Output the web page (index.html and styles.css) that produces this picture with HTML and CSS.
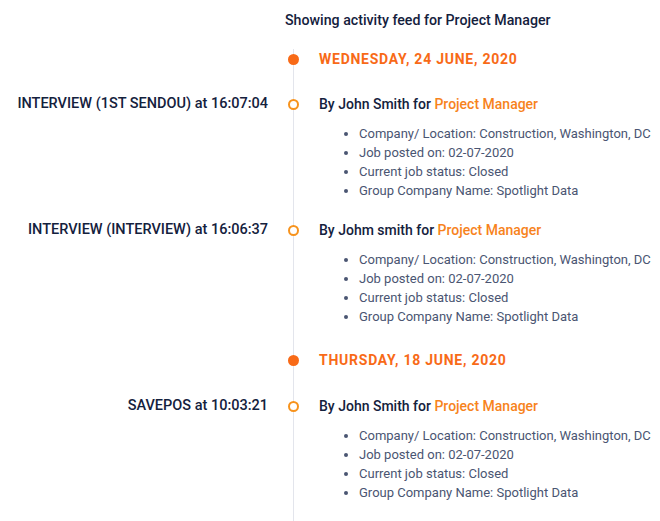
FILE: index.html
```html
<!DOCTYPE html>
<html>
<head>
<meta charset="utf-8">
<link rel="stylesheet" href="styles.css">
</head>
<body>
<div class="page">
  <div class="header">Showing activity feed for Project Manager</div>
  <div class="timeline">
    <div class="row date-row">
      <div class="left"></div>
      <div class="axis"><span class="dot filled"></span></div>
      <div class="content date">WEDNESDAY, 24 JUNE, 2020</div>
    </div>
    <div class="row item-row first">
      <div class="left">INTERVIEW (1ST SENDOU) at 16:07:04</div>
      <div class="axis"><span class="dot ring"></span></div>
      <div class="content">
        <div class="title">By John Smith for <span class="link">Project Manager</span></div>
        <ul class="details">
          <li>Company/ Location: Construction, Washington, DC</li>
          <li>Job posted on: 02-07-2020</li>
          <li>Current job status: Closed</li>
          <li>Group Company Name: Spotlight Data</li>
        </ul>
      </div>
    </div>
    <div class="row item-row">
      <div class="left">INTERVIEW (INTERVIEW) at 16:06:37</div>
      <div class="axis"><span class="dot ring"></span></div>
      <div class="content">
        <div class="title">By Johm smith for <span class="link">Project Manager</span></div>
        <ul class="details">
          <li>Company/ Location: Construction, Washington, DC</li>
          <li>Job posted on: 02-07-2020</li>
          <li>Current job status: Closed</li>
          <li>Group Company Name: Spotlight Data</li>
        </ul>
      </div>
    </div>
    <div class="row date-row second">
      <div class="left"></div>
      <div class="axis"><span class="dot filled"></span></div>
      <div class="content date">THURSDAY, 18 JUNE, 2020</div>
    </div>
    <div class="row item-row first last">
      <div class="left">SAVEPOS at 10:03:21</div>
      <div class="axis"><span class="dot ring"></span></div>
      <div class="content">
        <div class="title">By John Smith for <span class="link">Project Manager</span></div>
        <ul class="details">
          <li>Company/ Location: Construction, Washington, DC</li>
          <li>Job posted on: 02-07-2020</li>
          <li>Current job status: Closed</li>
          <li>Group Company Name: Spotlight Data</li>
        </ul>
      </div>
    </div>
  </div>
</div>
</body>
</html>
```

FILE: styles.css
```css
html, body {
  margin: 0;
  padding: 0;
  background: #ffffff;
}
body {
  font-family: Roboto, "Noto Sans", "Liberation Sans", sans-serif;
  color: #14213d;
  height: 521px;
  overflow: hidden;
}
.page {
  padding-top: 10px;
}
.header {
  padding-left: 285px;
  font-size: 14.2px;
  line-height: 20px;
  color: #14213d;
  font-weight: 500;
}
.timeline {
  margin-top: 19px;
  background: linear-gradient(#e3e5ec, #e3e5ec) no-repeat 293px 0 / 1px 100%;
  padding-bottom: 40px;
}
.row {
  display: grid;
  grid-template-columns: 280px 26px 1fr;
}
.left {
  padding-right: 12px;
  text-align: right;
  font-size: 14.5px;
  line-height: 20px;
  font-weight: 500;
  color: #14213d;
}
.axis {
  display: flex;
  justify-content: center;
  height: 20px;
  align-items: center;
}
.dot {
  display: block;
  box-sizing: border-box;
  width: 11px;
  height: 11px;
  border-radius: 50%;
  margin-left: 1px;
}
.dot.filled {
  background: #f86a17;
}
.dot.ring {
  background: #fff;
  border: 2px solid #f7931d;
}
.content {
  padding-left: 13px;
}
.date {
  font-size: 14px;
  line-height: 20px;
  font-weight: 700;
  letter-spacing: 0.75px;
  color: #f86a17;
}
.item-row.first {
  margin-top: 25px;
}
.item-row {
  margin-top: 20px;
}
.item-row.last {
  margin-top: 26px;
}
.date-row.second {
  margin-top: 24px;
}
.title {
  font-size: 14px;
  line-height: 20px;
  font-weight: 500;
  color: #14213d;
}
.link {
  color: #f7831c;
}
.details {
  margin: 10px 0 0 0;
  padding-left: 40px;
  font-size: 13px;
  line-height: 19px;
  color: #4a5572;
}
```
